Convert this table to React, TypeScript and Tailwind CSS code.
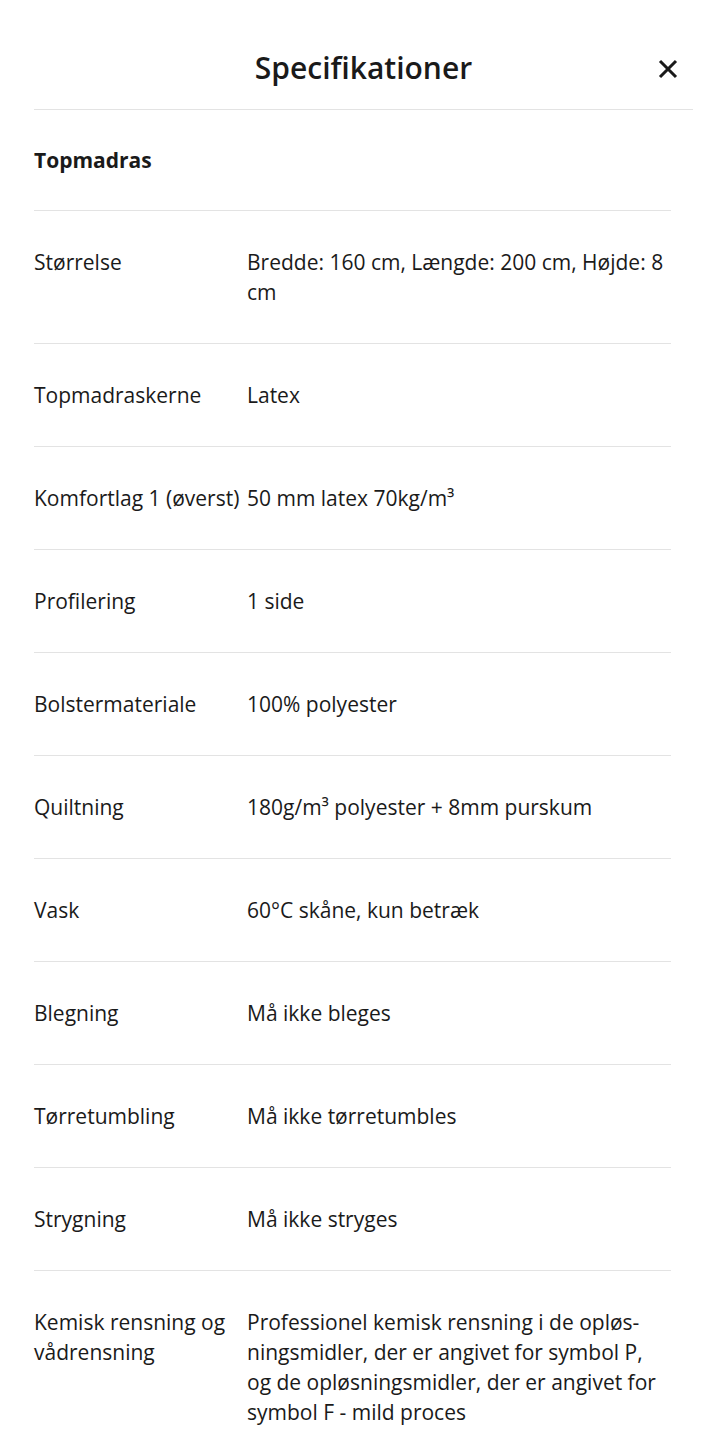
import React from "react";

const rows: [string, string][] = [
  ["Størrelse", "Bredde: 160 cm, Længde: 200 cm, Højde: 8 cm"],
  ["Topmadraskerne", "Latex"],
  ["Komfortlag 1 (øverst)", "50 mm latex 70kg/m³"],
  ["Profilering", "1 side"],
  ["Bolstermateriale", "100% polyester"],
  ["Quiltning", "180g/m³ polyester + 8mm purskum"],
  ["Vask", "60°C skåne, kun betræk"],
  ["Blegning", "Må ikke bleges"],
  ["Tørretumbling", "Må ikke tørretumbles"],
  ["Strygning", "Må ikke stryges"],
  [
    "Kemisk rensning og vådrensning",
    "Professionel kemisk rensning i de opløs\u00ADningsmidler, der er angivet for symbol P, og de opløsningsmidler, der er angivet for symbol F - mild proces",
  ],
];

export default function App() {
  return (
    <div
      className="min-h-[1452px] bg-white text-[#1a1a1a]"
      style={{ fontFamily: '"Open Sans", "Noto Sans", sans-serif' }}
    >
      <div className="pl-[34px] pr-[22px]">
        <div className="relative flex items-center justify-center border-b border-[#e3e3e3] pt-[49px] pb-[22px]">
          <h1 className="text-[30px] leading-[38px] font-semibold">Specifikationer</h1>
          <button className="absolute right-[9px] top-[53px] text-[#1a1a1a]" aria-label="Luk">
            <svg width="32" height="32" viewBox="0 0 24 24" fill="none" stroke="currentColor" strokeWidth="2.3" strokeLinecap="butt">
              <path d="M6 6L18 18M18 6L6 18" />
            </svg>
          </button>
        </div>
      </div>
      <div className="pl-[34px] pr-[44px]">
        <div className="border-b border-[#e3e3e3] py-[35px] text-[21px] leading-[30px] font-bold">Topmadras</div>
        {rows.map(([k, v], i) => (
          <div
            key={k}
            className={`flex py-[36px] text-[21px] leading-[30px] ${i < rows.length - 1 ? "border-b border-[#e3e3e3]" : ""}`}
          >
            <div className="w-[213px] shrink-0 pr-1">{k}</div>
            <div className="flex-1">{v}</div>
          </div>
        ))}
      </div>
    </div>
  );
}
